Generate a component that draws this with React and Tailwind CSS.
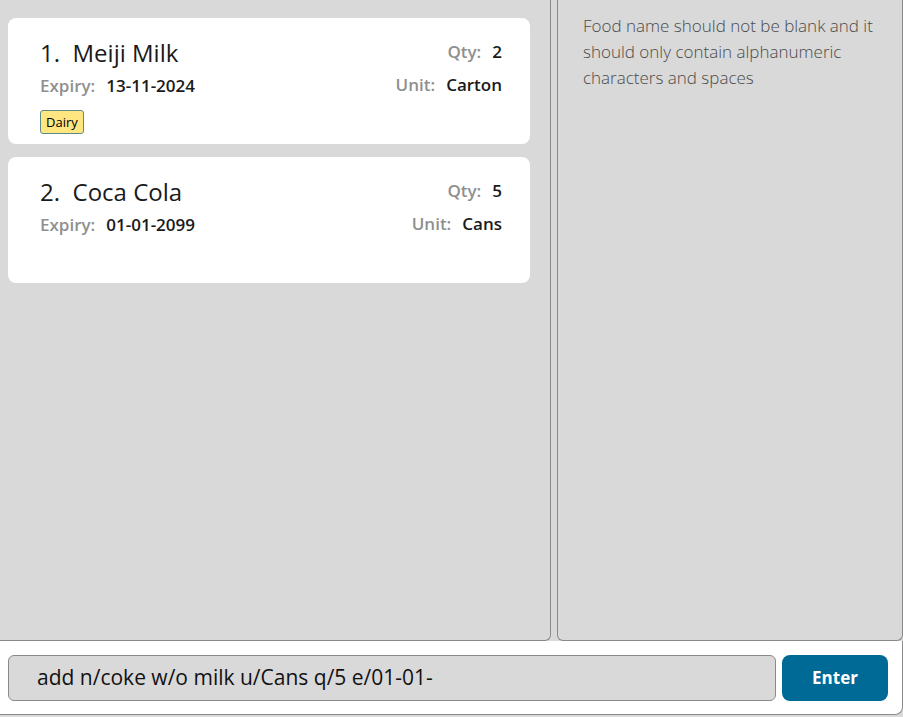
const items = [
  { name: "Meiji Milk", qty: "2", expiry: "13-11-2024", unit: "Carton", tags: ["Dairy"] },
  { name: "Coca Cola", qty: "5", expiry: "01-01-2099", unit: "Cans", tags: [] },
];

function FoodCard({ index, item }) {
  return (
    <div className="h-[126px] rounded-lg bg-white pl-8 pr-7 pt-[20px]">
      <div className="flex items-start justify-between">
        <div>
          <div className="text-[24px] leading-[30px] text-[#1a1a1a]">
            {index}.&nbsp; {item.name}
          </div>
          <div className="mt-[6px] text-[17px] font-semibold leading-6">
            <span className="text-[#8f8f8f]">Expiry:</span>
            <span className="ml-[11px] text-[#1a1a1a]">{item.expiry}</span>
          </div>
        </div>
        <div className="pt-[2px] text-right text-[17px] font-semibold leading-6">
          <div>
            <span className="text-[#8f8f8f]">Qty:</span>
            <span className="ml-[11px] text-[#1a1a1a]">{item.qty}</span>
          </div>
          <div className="mt-[9px]">
            <span className="text-[#8f8f8f]">Unit:</span>
            <span className="ml-[11px] text-[#1a1a1a]">{item.unit}</span>
          </div>
        </div>
      </div>
      <div className="mt-[12px] flex gap-2">
        {item.tags.map((t) => (
          <span
            key={t}
            className="rounded-[3px] border border-[#5e8b8a] bg-[#ffe680] px-[5px] text-[13px] leading-[22px] text-black"
          >
            {t}
          </span>
        ))}
      </div>
    </div>
  );
}

export default function App() {
  return (
    <div
      className="flex h-[717px] w-[903px] flex-col bg-[#d9d9d9]"
      style={{ fontFamily: '"Open Sans", "Noto Sans", sans-serif' }}
    >
      <div className="flex h-[641px] gap-[6px]">
        <div className="flex w-[551px] flex-col gap-[13px] rounded-br-md border-r border-b border-[#8a8a8a] pt-[18px] pl-2 pr-5">
          {items.map((it, i) => (
            <FoodCard key={it.name} index={i + 1} item={it} />
          ))}
        </div>
        <div className="flex-1 rounded-b-md border-x border-b border-[#8a8a8a] pl-[25px] pr-3 pt-[13px]">
          <p className="text-[17px] font-light leading-[26px] text-[#4a4a4a]">
            Food name should not be blank and it should only contain alphanumeric characters and spaces
          </p>
        </div>
      </div>
      <div className="flex h-[74px] items-center gap-[6px] rounded-br-lg border-r border-b border-[#8a8a8a] bg-white pl-2 pr-[14px]">
        <div className="flex h-[46px] flex-1 items-center rounded-md border border-[#8a8a8a] bg-[#d9d9d9] pl-[28px] text-[21px] text-[#111]">
          add n/coke w/o milk u/Cans q/5 e/01-01-
        </div>
        <button className="h-[46px] w-[106px] rounded-lg bg-[#006a96] text-[17px] font-bold text-white">
          Enter
        </button>
      </div>
    </div>
  );
}
